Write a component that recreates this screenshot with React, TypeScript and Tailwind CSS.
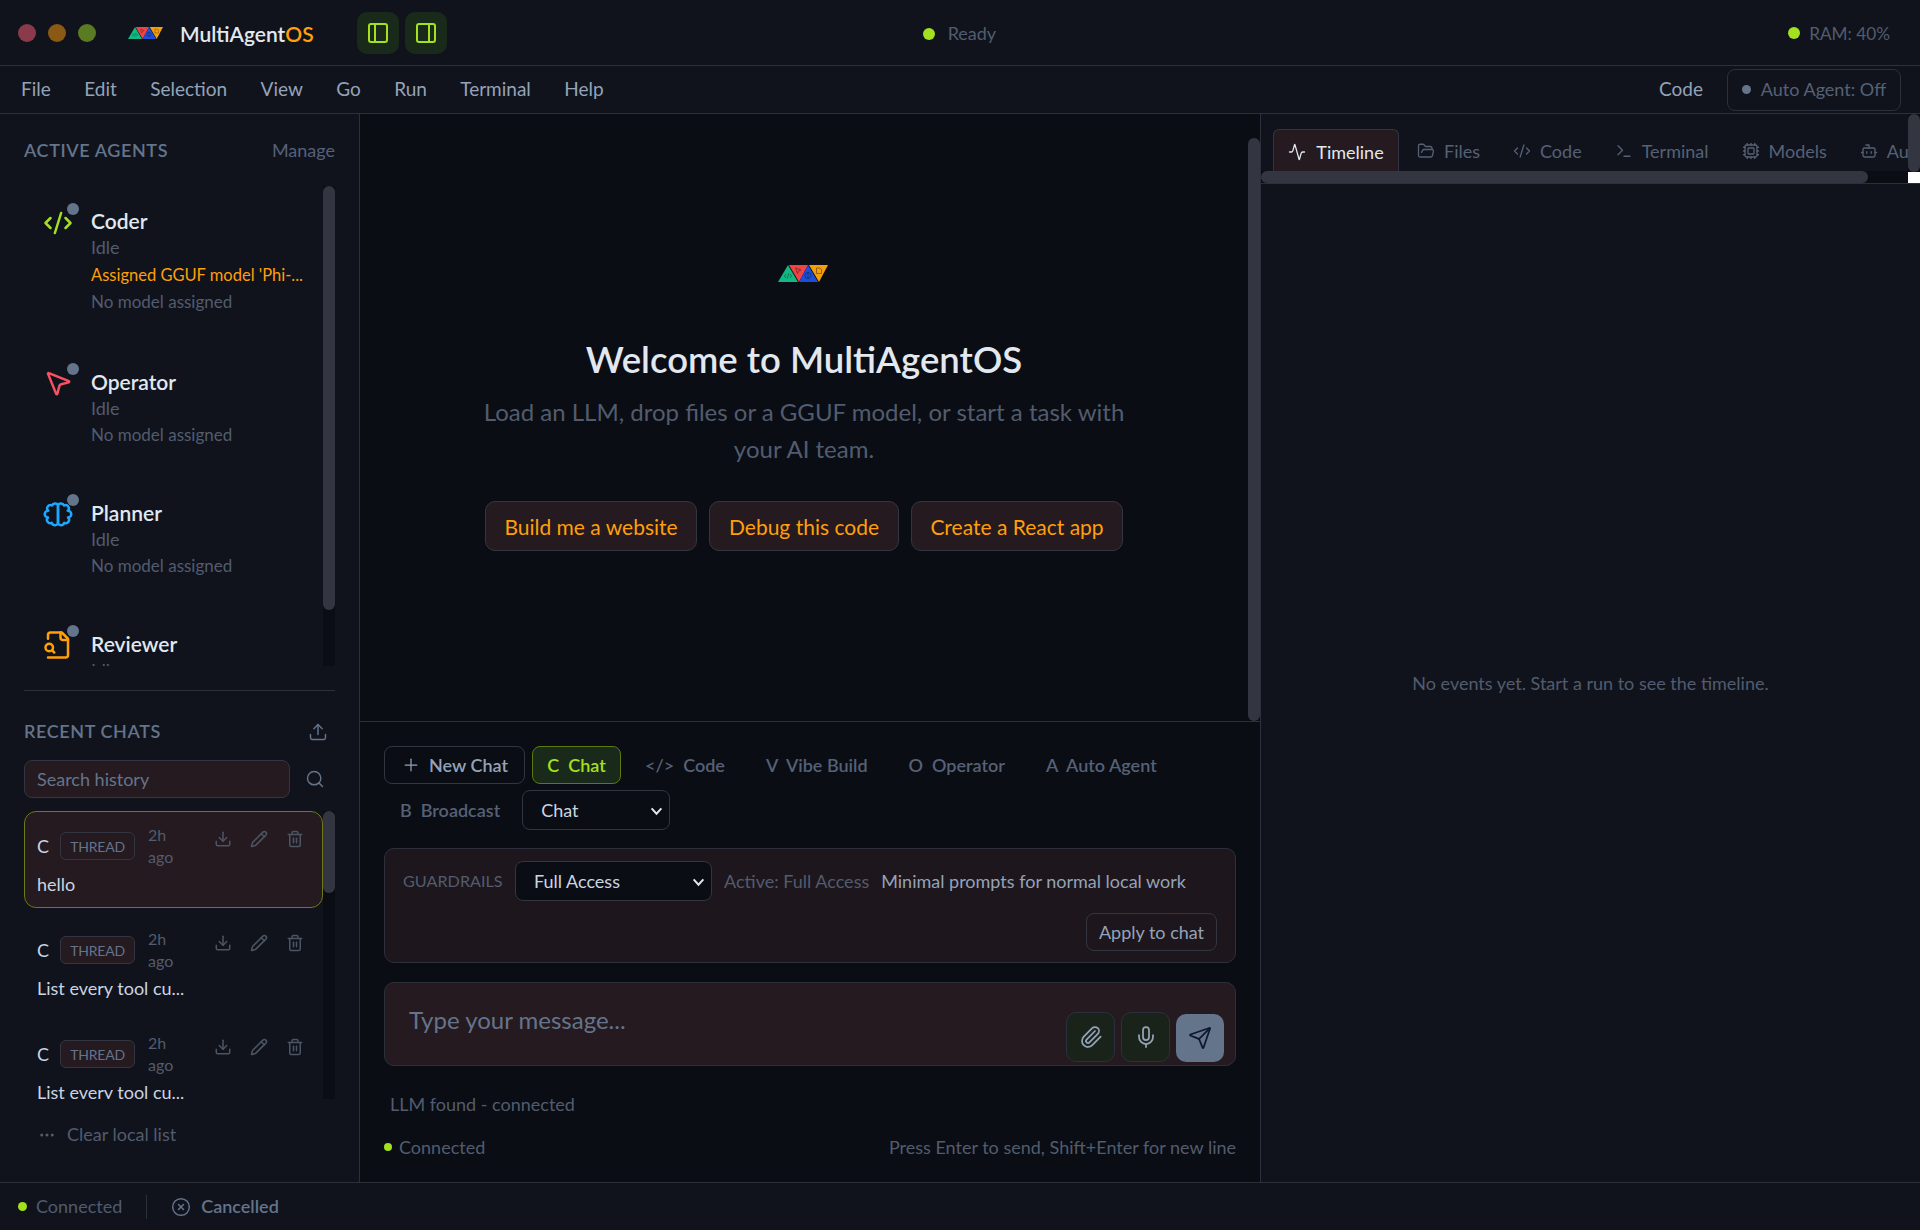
import React from "react";
import {
  Activity,
  Bot,
  CircleX,
  CodeXml,
  Cpu,
  Download,
  Ellipsis,
  FolderOpen,
  Mic,
  MousePointer2,
  PanelLeft,
  PanelRight,
  Paperclip,
  Pencil,
  Plus,
  Search,
  Send,
  Terminal,
  Trash2,
  Upload,
} from "lucide-react";

const font = "[font-family:'Lato',sans-serif]";

const Logo = ({ className }: { className: string }) => (
  <svg viewBox="0 0 50 17" className={className}>
    <polygon points="0,17 10,0 20,17" fill="#10b981" />
    <polygon points="11,0 30,0 21,17" fill="#ef4444" />
    <polygon points="21,17 30,0 40,17" fill="#1d4ed8" />
    <polygon points="31,0 50,0 41,17" fill="#f59e0b" />
    <g fill="none" stroke="#0b1220" strokeWidth="0.6" opacity="0.7">
      <path d="M8 9 6.5 11 8 13M12 9 13.5 11 12 13M10.6 8.5 9.4 13.5" />
      <path d="M17.5 3 23 5 20.5 6 19.5 8.5Z" />
      <circle cx="30" cy="10.5" r="3" />
      <path d="M30 7.5V13.5" />
      <path d="M38.5 3H42L43.5 4.5V8.5H38.5Z" />
    </g>
  </svg>
);

const BrainIcon = ({ className }: { className?: string }) => (
  <svg viewBox="0 0 24 24" className={className} fill="none" stroke="currentColor" strokeWidth="2" strokeLinejoin="round">
    <path d="M12 4.8A2.7 2.7 0 0 0 7.2 5.2 2.6 2.6 0 0 0 4.2 9.4 2.7 2.7 0 0 0 4 14.8 2.6 2.6 0 0 0 7 19 2.7 2.7 0 0 0 12 19.6Z" />
    <path d="M12 4.8A2.7 2.7 0 0 1 16.8 5.2 2.6 2.6 0 0 1 19.8 9.4 2.7 2.7 0 0 1 20 14.8 2.6 2.6 0 0 1 17 19 2.7 2.7 0 0 1 12 19.6Z" />
  </svg>
);

const FileSearchIcon = ({ className }: { className?: string }) => (
  <svg viewBox="0 0 24 24" className={className} fill="none" stroke="currentColor" strokeWidth="2" strokeLinecap="round" strokeLinejoin="round">
    <path d="M4 22h14a2 2 0 0 0 2-2V7l-5-5H6a2 2 0 0 0-2 2v3" />
    <path d="M14 2v4a2 2 0 0 0 2 2h4" />
    <path d="M5 17a3 3 0 1 0 0-6 3 3 0 0 0 0 6z" />
    <path d="m9 18-1.5-1.5" />
  </svg>
);

const agents = [
  { name: "Coder", Icon: CodeXml, color: "text-[#a3e01f]", note: "Assigned GGUF model 'Phi-..." },
  { name: "Operator", Icon: MousePointer2, color: "text-[#f85161]" },
  { name: "Planner", Icon: BrainIcon, color: "text-[#1ea7fd]" },
  { name: "Reviewer", Icon: FileSearchIcon, color: "text-[#ff9f0a]" },
];

const chats = ["hello", "List every tool cu...", "List every tool cu..."];

const menus = ["File", "Edit", "Selection", "View", "Go", "Run", "Terminal", "Help"];

const modes = [
  { key: "</>", label: "Code" },
  { key: "V", label: "Vibe Build" },
  { key: "O", label: "Operator" },
  { key: "A", label: "Auto Agent" },
];

const tabs = [
  { label: "Files", Icon: FolderOpen },
  { label: "Code", Icon: CodeXml },
  { label: "Terminal", Icon: Terminal },
  { label: "Models", Icon: Cpu },
  { label: "Auto", Icon: Bot },
];

const Sidebar = () => (
  <aside className="w-[360px] shrink-0 border-r border-[#2c303a] bg-[#10131c] flex flex-col pl-6 pr-6">
    <div className="h-[72px] shrink-0 flex items-center justify-between">
      <span className="text-[18px] font-semibold tracking-[0.6px] text-[#64748b]">ACTIVE AGENTS</span>
      <span className="text-[18px] text-[#55607a]">Manage</span>
    </div>
    <div className="h-[480px] shrink-0 flex overflow-hidden">
      <div className="flex-1 overflow-hidden">
        {agents.map((a, i) => (
          <div key={a.name} className={`flex pl-[19px] ${i === 0 ? "h-[160px] pt-[19px]" : "h-[131px] pt-5"}`}>
            <div className="relative w-[48px] shrink-0">
              <a.Icon className={`size-[30px] ${a.color} ${i === 0 ? "mt-[3px]" : "mt-[2px]"}`} />
              <span className={`absolute left-[24px] size-3 rounded-full bg-[#64748b] ${i === 0 ? "top-[-2px]" : "top-[-3px]"}`} />
            </div>
            <div className="flex flex-col">
              <span className="text-[21px] leading-[32px] font-semibold text-[#e2e8f0]">{a.name}</span>
              <span className="text-[18px] leading-[21px] text-[#525c6e]">Idle</span>
              {a.note && <span className="text-[16.5px] leading-[34px] text-[#ff9f0a] whitespace-nowrap">{a.note}</span>}
              <span className={`text-[17px] leading-[22px] text-[#525c6e] ${a.note ? "-mt-[1px]" : "mt-[5px]"}`}>No model assigned</span>
            </div>
          </div>
        ))}
      </div>
      <div className="w-3 shrink-0 bg-[#0a0d14]">
        <div className="h-[424px] rounded-full bg-[#333640]" />
      </div>
    </div>
    <div className="h-px bg-[#2c303a] mt-6 shrink-0" />
    <div className="mt-[27px] flex items-center justify-between pr-[7px]">
      <span className="text-[18px] font-semibold tracking-[0.6px] text-[#64748b]">RECENT CHATS</span>
      <Upload className="size-5 text-[#64748b]" strokeWidth={1.75} />
    </div>
    <div className="mt-[15px] flex items-center gap-[15px]">
      <div className="h-[38px] w-[266px] rounded-lg border border-[#333640] bg-[#241a20] px-3 flex items-center text-[18px] text-[#64748b]">Search history</div>
      <Search className="size-5 text-[#64748b]" strokeWidth={1.75} />
    </div>
    <div className="mt-[13px] h-[288px] flex overflow-hidden shrink-0">
      <div className="flex-1 flex flex-col gap-[7px] overflow-hidden">
        {chats.map((c, i) => (
          <div key={i} className={`h-[97px] shrink-0 rounded-xl border px-3 pt-[12px] ${i === 0 ? "border-[#6b7a1a] bg-[#241a20]" : "border-transparent"}`}>
            <div className="flex items-center">
              <span className="w-[23px] text-[18px] text-[#cbd5e1]">C</span>
              <span className={`h-[28px] w-[75px] rounded-md border border-[#333640] flex items-center justify-center text-[14px] tracking-[-0.2px] text-[#64748b] ${i === 0 ? "" : "bg-[#241a20]"}`}>THREAD</span>
              <span className="ml-[13px] w-[45px] text-[16px] leading-[22px] text-[#525c6e]">2h ago</span>
              <div className="flex gap-[18px] -mt-[15px] ml-[21px] text-[#4b5563]">
                <Download className="size-[18px]" />
                <Pencil className="size-[18px]" />
                <Trash2 className="size-[18px]" />
              </div>
            </div>
            <div className="mt-[4px] text-[18px] leading-[24px] text-[#cbd5e1] whitespace-nowrap">{c}</div>
          </div>
        ))}
      </div>
      <div className="w-3 shrink-0 bg-[#0a0d14]">
        <div className="h-[82px] rounded-full bg-[#333640]" />
      </div>
    </div>
    <div className="mt-[22px] flex items-center gap-[11px] pl-[14px] text-[18px] text-[#525c6e]">
      <Ellipsis className="size-[18px]" />
      Clear local list
    </div>
  </aside>
);

const Chevron = () => (
  <svg viewBox="0 0 12 12" className="size-[13px] text-[#e2e8f0]" fill="none" stroke="currentColor" strokeWidth="1.8">
    <path d="M1.5 4 6 9l4.5-5" />
  </svg>
);

const Center = () => (
  <main className="w-[901px] shrink-0 border-r border-[#2c303a] bg-[#0a0d14] flex flex-col">
    <div className="h-[608px] shrink-0 border-b border-[#2c303a] flex">
      <div className="flex-1 flex flex-col items-center pt-[151px]">
        <Logo className="w-[50px] h-[17px] -ml-[3px]" />
        <h1 className="mt-[53px] text-[36.5px] leading-[48px] font-semibold text-[#e2e8f0]">Welcome to MultiAgentOS</h1>
        <p className="mt-[10px] w-[660px] text-center text-[24px] leading-[37px] text-[#525c6e]">
          Load an LLM, drop files or a GGUF model, or start a task with your AI team.
        </p>
        <div className="mt-[34px] flex gap-3">
          <button className="h-[50px] w-[212px] rounded-[10px] border border-[#333640] bg-[#241a20] pt-[1px] text-[21px] text-[#ff9f0a]">Build me a website</button>
          <button className="h-[50px] w-[190px] rounded-[10px] border border-[#333640] bg-[#241a20] pt-[1px] text-[21px] text-[#ff9f0a]">Debug this code</button>
          <button className="h-[50px] w-[212px] rounded-[10px] border border-[#333640] bg-[#241a20] pt-[1px] text-[21px] text-[#ff9f0a]">Create a React app</button>
        </div>
      </div>
      <div className="w-3 shrink-0 pt-6">
        <div className="h-full rounded-full bg-[#333640]" />
      </div>
    </div>
    <div className="flex-1 px-6 pt-6 flex flex-col">
      <div className="flex items-center gap-[7px] h-[38px]">
        <button className="h-[38px] w-[141px] rounded-lg border border-[#333640] flex items-center justify-center gap-2 text-[18px] font-semibold text-[#94a3b8]">
          <Plus className="size-5" strokeWidth={1.5} /> New Chat
        </button>
        <button className="h-[38px] w-[89px] rounded-lg border border-[#5a7a10] bg-[#1a2a1a] text-[18px] font-semibold text-[#a3e01f]">C&nbsp;&nbsp;Chat</button>
        {modes.map((m) => (
          <span key={m.label} className="px-[17px] text-[18px] font-semibold text-[#566176] whitespace-nowrap">
            {m.key}&nbsp;&nbsp;{m.label}
          </span>
        ))}
      </div>
      <div className="mt-[6px] flex items-center gap-[22px] pl-4">
        <span className="text-[18px] font-semibold text-[#566176]">B&nbsp;&nbsp;Broadcast</span>
        <div className="h-[40px] w-[148px] rounded-lg border border-[#333640] flex items-center justify-between pl-[18px] pr-[6px] text-[18px] text-[#cbd5e1]">
          Chat
          <Chevron />
        </div>
      </div>
      <div className="mt-[18px] h-[115px] rounded-[10px] border border-[#2c303a] bg-[#1d161c] px-[18px] pt-3">
        <div className="flex items-center">
          <span className="w-[112px] text-[16.2px] text-[#525c6e]">GUARDRAILS</span>
          <div className="h-[40px] w-[197px] rounded-lg border border-[#333640] bg-[#0a0d14] flex items-center justify-between pl-[18px] pr-[6px] text-[18px] text-[#cbd5e1]">
            Full Access
            <Chevron />
          </div>
          <span className="ml-3 text-[18px] text-[#525c6e] whitespace-nowrap">Active: Full Access</span>
          <span className="ml-3 text-[18px] text-[#94a3b8] whitespace-nowrap">Minimal prompts for normal local work</span>
        </div>
        <div className="mt-3 flex justify-end">
          <button className="h-[38px] w-[131px] rounded-lg border border-[#333640] text-[18px] text-[#94a3b8]">Apply to chat</button>
        </div>
      </div>
      <div className="mt-[19px] h-[84px] rounded-[10px] border border-[#2c303a] bg-[#241a20] relative pl-6 pt-[19px] text-[24px] leading-[36px] text-[#64748b]">
        Type your message...
        <div className="absolute right-[11px] bottom-[3px] flex items-end gap-[6px]">
          <span className="h-[50px] w-[49px] rounded-[10px] border border-[#2c303a] bg-[#1a2319] flex items-center justify-center text-[#94a3b8]"><Paperclip className="size-6" strokeWidth={1.75} /></span>
          <span className="h-[50px] w-[49px] rounded-[10px] border border-[#2c303a] bg-[#1a2319] flex items-center justify-center text-[#94a3b8]"><Mic className="size-6" strokeWidth={1.75} /></span>
          <span className="h-[48px] w-[48px] rounded-[10px] bg-[#64748b] flex items-center justify-center text-[#0f172a]"><Send className="size-6" strokeWidth={1.75} /></span>
        </div>
      </div>
      <div className="mt-[26px] pl-[6px] text-[18px] leading-[24px] text-[#525c6e]">LLM found - connected</div>
      <div className="mt-[19px] flex items-center justify-between text-[18px] leading-[24px] text-[#525c6e]">
        <span className="flex items-center gap-[7px]"><span className="size-2 rounded-full bg-[#a3e01f]" />Connected</span>
        <span>Press Enter to send, Shift+Enter for new line</span>
      </div>
    </div>
  </main>
);

const RightPanel = () => (
  <section className="flex-1 bg-[#10131c] flex flex-col min-w-0">
    <div className="h-[70px] shrink-0 border-b border-[#2c303a] relative overflow-hidden">
      <div className="flex items-end h-[58px] pl-3">
        <div className="h-[43px] w-[126px] shrink-0 rounded-t-md border border-b-0 border-[#333640] bg-[#241a20] flex items-center justify-center gap-[10px] pt-[2px] text-[18px] text-[#e2e8f0]">
          <Activity className="size-[18px]" strokeWidth={1.75} /> Timeline
        </div>
        <div className="flex h-[42px] items-center gap-[33px] pl-[18px] whitespace-nowrap text-[18px] text-[#566176]">
          {tabs.map((t) => (
            <span key={t.label} className="flex items-center gap-[9px]">
              <t.Icon className="size-[18px]" strokeWidth={1.75} /> {t.label}
            </span>
          ))}
        </div>
      </div>
      <div className="absolute left-0 right-0 bottom-0 h-3 bg-[#0a0d14]">
        <div className="h-full w-[607px] rounded-full bg-[#333640]" />
      </div>
      <div className="absolute right-0 bottom-0 size-3 bg-white" />
      <div className="absolute right-0 top-0 w-3 h-[58px] bg-[#0a0d14]">
        <div className="h-full rounded-full bg-[#333640]" />
      </div>
    </div>
    <div className="flex-1 flex items-center justify-center text-[18px] text-[#525c6e]">
      No events yet. Start a run to see the timeline.
    </div>
  </section>
);

export default function App() {
  return (
    <div className={`${font} h-[1230px] w-[1920px] overflow-hidden bg-[#10131c] flex flex-col`}>
      <header className="h-[66px] shrink-0 border-b border-[#2c303a] flex items-center relative pl-[18px] pr-[30px]">
        <div className="flex gap-3">
          <span className="size-[18px] rounded-full bg-[#8a3a4a]" />
          <span className="size-[18px] rounded-full bg-[#8a5a14]" />
          <span className="size-[18px] rounded-full bg-[#5a7a24]" />
        </div>
        <Logo className="ml-[32px] w-[35px] h-[12px]" />
        <span className="ml-[17px] pt-[2px] text-[21px] font-semibold text-[#e2e8f0]">
          MultiAgent<span className="text-[#ff9f0a]">OS</span>
        </span>
        <div className="ml-[43px] flex gap-[6px]">
          <span className="size-[42px] rounded-[10px] bg-[#1a2a1a] flex items-center justify-center text-[#a3e01f]"><PanelLeft className="size-6" /></span>
          <span className="size-[42px] rounded-[10px] bg-[#1a2a1a] flex items-center justify-center text-[#a3e01f]"><PanelRight className="size-6" /></span>
        </div>
        <div className="ml-[476px] pt-[2px] flex items-center gap-[13px] text-[18px] text-[#525c6e]">
          <span className="size-3 rounded-full bg-[#a3e01f]" />Ready
        </div>
        <div className="ml-auto pt-[2px] flex items-center gap-[9px] text-[17.2px] text-[#525c6e]">
          <span className="size-3 rounded-full bg-[#a3e01f]" />RAM: 40%
        </div>
      </header>
      <nav className="h-[48px] shrink-0 border-b border-[#2c303a] flex items-center pl-[21px] pr-[19px]">
        <div className="flex gap-[33.4px] text-[19px] text-[#94a3b8]">
          {menus.map((m) => (
            <span key={m}>{m}</span>
          ))}
        </div>
        <span className="ml-auto text-[19px] text-[#94a3b8]">Code</span>
        <div className="ml-6 h-[42px] w-[174px] rounded-lg border border-[#2c303a] flex items-center justify-center gap-[10px] text-[18px] text-[#566176]">
          <span className="size-[9px] rounded-full bg-[#64748b]" />Auto Agent: Off
        </div>
      </nav>
      <div className="flex-1 flex min-h-0">
        <Sidebar />
        <Center />
        <RightPanel />
      </div>
      <footer className="h-[48px] shrink-0 border-t border-[#2c303a] flex items-center pl-[18px] text-[18px]">
        <span className="size-[9px] rounded-full bg-[#a3e01f]" />
        <span className="ml-[9px] text-[#4f5b70]">Connected</span>
        <span className="ml-6 h-6 w-px bg-[#2c303a]" />
        <CircleX className="ml-6 size-5 text-[#64748b]" strokeWidth={1.75} />
        <span className="ml-[10px] font-semibold text-[#64748b]">Cancelled</span>
      </footer>
    </div>
  );
}
